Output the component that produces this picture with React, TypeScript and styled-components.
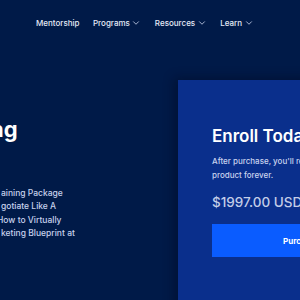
import React from 'react'
import styled, { createGlobalStyle } from 'styled-components'
import { ChevronDown } from 'lucide-react'

const GlobalStyle = createGlobalStyle`
  html, body {
    margin: 0;
    padding: 0;
    background: #001a48;
  }
  body {
    font-family: Inter, "Noto Sans", sans-serif;
    -webkit-font-smoothing: antialiased;
  }
`

const navItems = [
  { label: 'Mentorship', menu: false },
  { label: 'Programs', menu: true },
  { label: 'Resources', menu: true },
  { label: 'Learn', menu: true },
]

const leadLines = [
  { text: 'aining Package', shift: 1 },
  { text: 'gotiate Like A', shift: 1 },
  { text: 'How to Virtually', shift: -3 },
  { text: 'keting Blueprint at', shift: 1 },
]

const App: React.FC = () => {
  return (
    <Page>
      <GlobalStyle />
      <Nav>
        {navItems.map(item => (
          <NavItem key={item.label}>
            {item.label}
            {item.menu && <ChevronDown size={10} strokeWidth={2} />}
          </NavItem>
        ))}
      </Nav>
      <Hero>
        <Intro>
          <Title>ng</Title>
          <Lead>
            {leadLines.map(line => (
              <LeadLine key={line.text} shift={line.shift}>
                {line.text}
              </LeadLine>
            ))}
          </Lead>
        </Intro>
        <Card>
          <CardTitle>Enroll Today</CardTitle>
          <CardText>
            After purchase, you'll receive lifetime access to this
            <br />
            product forever.
          </CardText>
          <Price>$1997.00 USD</Price>
          <BuyButton>Purchase</BuyButton>
        </Card>
      </Hero>
    </Page>
  )
}

export default App

const Page = styled.div`
  width: 300px;
  height: 300px;
  overflow: hidden;
  background: #001a48;
  color: #ffffff;
`

const Nav = styled.nav`
  display: flex;
  align-items: flex-start;
  gap: 13.5px;
  height: 80px;
  box-sizing: border-box;
  padding: 17px 0 0 36px;
`

const NavItem = styled.div`
  display: flex;
  align-items: center;
  gap: 1.5px;
  font-size: 8px;
  line-height: 12px;
  font-weight: 500;
  color: #e6ebf7;
  white-space: nowrap;

  svg {
    color: #c9d3ec;
  }
`

const Hero = styled.div`
  display: flex;
  align-items: flex-start;
`

const Intro = styled.div`
  width: 178px;
  flex-shrink: 0;
  padding-top: 36px;
`

const Title = styled.h1`
  margin: 0 0 0 -10px;
  font-size: 22px;
  line-height: 26px;
  font-weight: 700;
  color: #ffffff;
  white-space: nowrap;
`

const Lead = styled.div`
  margin-top: 45px;
  font-size: 8.5px;
  line-height: 13.4px;
  font-weight: 500;
  color: #c7d1ec;
`

const LeadLine = styled.div<{ shift: number }>`
  margin-left: ${p => p.shift}px;
  white-space: nowrap;
`

const Card = styled.div`
  width: 247px;
  height: 240px;
  flex-shrink: 0;
  box-sizing: border-box;
  padding: 45px 34px 0;
  background: #0a2f8c;
  box-shadow: -4px -2px 10px rgba(0, 8, 30, 0.45);
`

const CardTitle = styled.h2`
  margin: 0;
  font-size: 17px;
  line-height: 22px;
  font-weight: 600;
  color: #ffffff;
  white-space: nowrap;
`

const CardText = styled.p`
  margin: 7px 0 0;
  font-size: 8px;
  line-height: 14px;
  font-weight: 500;
  color: #c9d3ee;
  white-space: nowrap;
`

const Price = styled.div`
  margin-top: 11px;
  font-size: 13.5px;
  line-height: 18px;
  font-weight: 500;
  color: #c3cde8;
  white-space: nowrap;
`

const BuyButton = styled.button`
  display: block;
  width: 100%;
  height: 33px;
  margin-top: 13px;
  border: none;
  background: #0a5cff;
  color: #ffffff;
  font-family: inherit;
  font-size: 8px;
  font-weight: 700;
  cursor: pointer;
`
